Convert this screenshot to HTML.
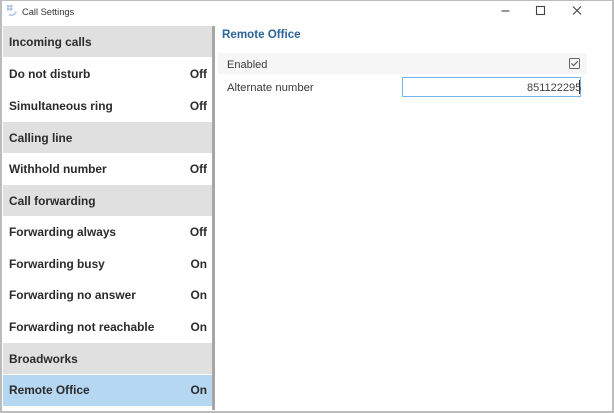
<!DOCTYPE html>
<html>
<head>
<meta charset="utf-8">
<style>
html,body{margin:0;padding:0;width:614px;height:413px;overflow:hidden;background:#fff;}
body{font-family:"Liberation Sans",sans-serif;color:#222;position:relative;}
.wrap{position:absolute;left:0;top:0;width:614px;height:413px;filter:blur(.3px);}
.frame{position:absolute;left:0;top:0;width:614px;height:413px;box-sizing:border-box;border:2px solid #bcbcbc;border-top-width:1px;}
.a{position:absolute;white-space:nowrap;}
.row{position:absolute;left:3px;width:209px;height:32px;line-height:32px;font-size:11.9px;font-weight:bold;color:#2b2b2b;}
.row .l{position:absolute;left:6px;top:0;}
.row .r{position:absolute;right:5px;top:0;}
.h{background:#e0e0e0;line-height:33px;height:31px;}
.s{background:#b5d7f2;}
</style>
</head>
<body>
<div class="wrap">
<svg class="a" style="left:6px;top:4px" width="12" height="14" viewBox="0 0 12 14">
<g fill="#a9bfe6"><rect x="1" y="1" width="2.5" height="2.5"/><rect x="4" y="1" width="2.5" height="2.5"/><rect x="1" y="4" width="2.5" height="2.5"/><rect x="4" y="4" width="2.5" height="2.5"/></g>
<path d="M3 10.5c2.5 1.5 6 .5 7-3" fill="none" stroke="#b9cdea" stroke-width="1.8"/>
</svg>
<div class="a" style="left:22px;top:5px;font-size:9.3px;line-height:14px;color:#333;">Call Settings</div>

<svg class="a" style="left:495px;top:3px" width="90" height="16" viewBox="0 0 90 16" fill="none" stroke="#444" stroke-width="1.1">
<path d="M6.5 8h8"/>
<rect x="41.5" y="3.5" width="8" height="8"/>
<path d="M78 3.5l8 8M86 3.5l-8 8"/>
</svg>

<div class="row h" style="top:26px"><span class="l">Incoming calls</span></div>
<div class="row" style="top:58px"><span class="l">Do not disturb</span><span class="r">Off</span></div>
<div class="row" style="top:90px"><span class="l">Simultaneous ring</span><span class="r">Off</span></div>
<div class="row h" style="top:122px"><span class="l">Calling line</span></div>
<div class="row" style="top:153px"><span class="l">Withhold number</span><span class="r">Off</span></div>
<div class="row h" style="top:185px"><span class="l">Call forwarding</span></div>
<div class="row" style="top:216px"><span class="l">Forwarding always</span><span class="r">Off</span></div>
<div class="row" style="top:248px"><span class="l">Forwarding busy</span><span class="r">On</span></div>
<div class="row" style="top:279px"><span class="l">Forwarding no answer</span><span class="r">On</span></div>
<div class="row" style="top:311px"><span class="l">Forwarding not reachable</span><span class="r">On</span></div>
<div class="row h" style="top:343px"><span class="l">Broadworks</span></div>
<div class="row s" style="top:375px;height:31px;line-height:31px"><span class="l">Remote Office</span><span class="r">On</span></div>

<div class="a" style="left:212px;top:26px;width:3px;height:384px;background:#a6a6a6;"></div>

<div class="a" style="left:222px;top:27px;font-size:11.6px;line-height:16px;font-weight:bold;color:#2b6599;">Remote Office</div>

<div class="a" style="left:218px;top:53px;width:369px;height:21px;background:#f6f6f6;"></div>
<div class="a" style="left:227px;top:58px;font-size:11px;line-height:15px;color:#3a3a3a;">Enabled</div>
<svg class="a" style="left:568px;top:57px" width="13" height="13" viewBox="0 0 13 13" fill="none">
<rect x="1.5" y="1.5" width="10" height="10" rx="1" stroke="#666" stroke-width="1"/>
<path d="M3.5 6.4l2.1 2.2 4.2-4.4" stroke="#555" stroke-width="1.1"/>
</svg>

<div class="a" style="left:227px;top:81px;font-size:11.3px;line-height:15px;color:#3a3a3a;">Alternate number</div>
<div class="a" style="left:402px;top:77px;width:179px;height:20px;box-sizing:border-box;border:1.5px solid #74b4ea;background:#fff;"></div>
<div class="a" style="left:527px;top:81px;font-size:11px;line-height:15px;color:#444;">851122295</div>
<div class="a" style="left:579px;top:80px;width:1px;height:14px;background:#333;"></div>

<div class="frame"></div>
</div>
</body>
</html>
